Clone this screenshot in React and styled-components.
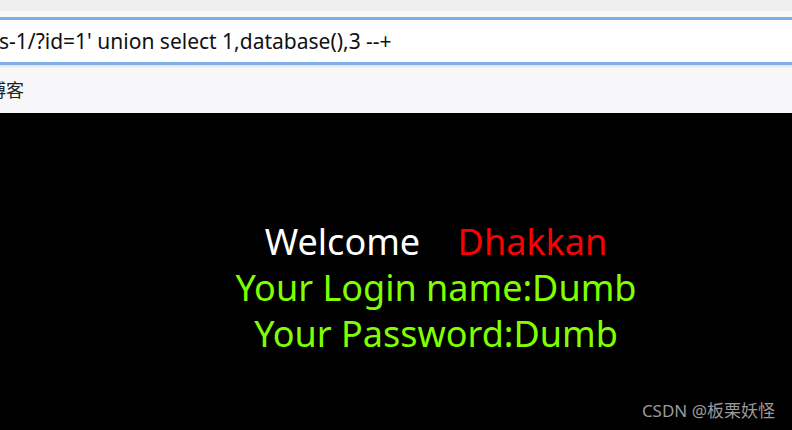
import React from 'react'
import styled, { createGlobalStyle } from 'styled-components'

const GlobalStyle = createGlobalStyle`
  html, body {
    margin: 0;
    padding: 0;
    background: #000;
    overflow: hidden;
  }
`

const Window = styled.div`
  width: 792px;
  height: 430px;
  display: flex;
  flex-direction: column;
  overflow: hidden;
  background: #000;
`

const TabStrip = styled.div`
  height: 11px;
  background: #efefef;
`

const ToolbarGap = styled.div`
  height: 6px;
  background: #f9f9fa;
`

const AddressBar = styled.div`
  height: 42px;
  background: #fff;
  border-top: 3px solid #7fb0ea;
  border-bottom: 3px solid #7fb0ea;
  box-shadow: 0 2px 2px rgba(0, 0, 0, 0.08);
  display: flex;
  align-items: center;
  overflow: hidden;
  position: relative;
  z-index: 1;
`

const UrlText = styled.span`
  font-family: 'Noto Sans', 'Noto Sans CJK SC', sans-serif;
  font-size: 21px;
  color: #111;
  white-space: pre;
  margin-left: -1px;
`

const BookmarkBar = styled.div`
  height: 48px;
  background: #f7f7f9;
  display: flex;
  align-items: center;
  overflow: hidden;
`

const Bookmark = styled.span`
  font-family: 'Noto Sans CJK SC', sans-serif;
  font-size: 18px;
  color: #222;
  margin-left: -12px;
`

const Page = styled.main`
  flex: 1;
  background: #000;
  display: flex;
  flex-direction: column;
  padding: 106px 0 0 80px;
  position: relative;
`

const Line = styled.div`
  text-align: center;
  font-family: 'Noto Sans', sans-serif;
  font-size: 36px;
  line-height: 46px;
  color: ${({ $color }) => $color || '#fff'};
  white-space: pre;
`

const Red = styled.span`
  color: #ff0000;
`

const Watermark = styled.div`
  position: absolute;
  right: 17px;
  bottom: 8px;
  font-family: 'Noto Sans', 'Noto Sans CJK SC', sans-serif;
  font-size: 17px;
  color: #9a9a9a;
`

export default function App() {
  return (
    <>
      <GlobalStyle />
      <Window>
        <TabStrip />
        <ToolbarGap />
        <AddressBar>
          <UrlText>s-1/?id=1' union select 1,database(),3 --+</UrlText>
        </AddressBar>
        <BookmarkBar>
          <Bookmark>博客</Bookmark>
        </BookmarkBar>
        <Page>
          <Line>
            Welcome{'    '}<Red>Dhakkan</Red>
          </Line>
          <Line $color="#7fff00">Your Login name:Dumb</Line>
          <Line $color="#7fff00">Your Password:Dumb</Line>
          <Watermark>CSDN @板栗妖怪</Watermark>
        </Page>
      </Window>
    </>
  )
}
